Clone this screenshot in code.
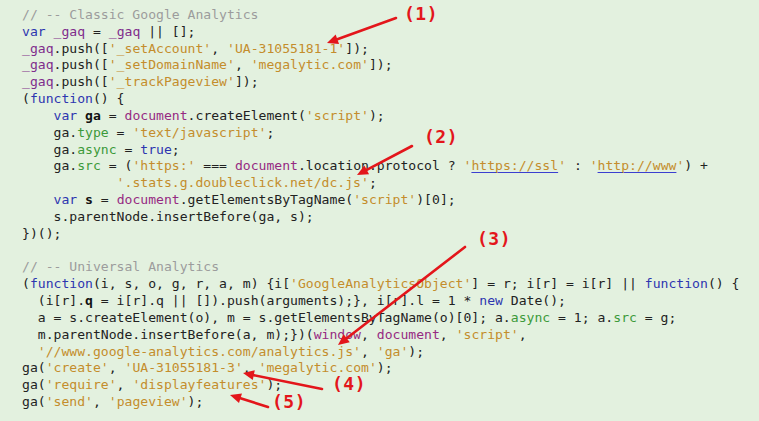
type Kind = "" | "c" | "k" | "v" | "d" | "s" | "p" | "b" | "u";
type Tok = [Kind, string];

// token colours, roughly a Xcode-ish light theme on green paper
const KIND_CLASS: Record<Kind, string> = {
  "":  "text-[#222]",
  c:   "text-[#9c9c9c]",
  k:   "text-[#2d36b0]",
  v:   "text-[#7f2d8c]",
  d:   "text-[#962a82]",
  s:   "text-[#c48d2c]",
  p:   "text-[#3c9a3a]",
  b:   "text-[#111] font-bold",
  u:   "text-[#c48d2c] underline decoration-[#3b3fd0] underline-offset-2",
};

const LINES: Tok[][] = [
  [["c", "// -- Classic Google Analytics"]],
  [["k", "var"], ["", " "], ["v", "_gaq"], ["", " = "], ["v", "_gaq"], ["", " || [];"]],
  [["v", "_gaq"], ["", ".push(["], ["s", "'_setAccount'"], ["", ", "], ["s", "'UA-31055181-1'"], ["", "]);"]],
  [["v", "_gaq"], ["", ".push(["], ["s", "'_setDomainName'"], ["", ", "], ["s", "'megalytic.com'"], ["", "]);"]],
  [["v", "_gaq"], ["", ".push(["], ["s", "'_trackPageview'"], ["", "]);"]],
  [["", "("], ["k", "function"], ["", "() {"]],
  [["", "    "], ["k", "var"], ["", " "], ["b", "ga"], ["", " = "], ["d", "document"], ["", ".createElement("], ["s", "'script'"], ["", ");"]],
  [["", "    ga."], ["p", "type"], ["", " = "], ["s", "'text/javascript'"], ["", ";"]],
  [["", "    ga."], ["p", "async"], ["", " = "], ["k", "true"], ["", ";"]],
  [
    ["", "    ga."], ["p", "src"], ["", " = ("], ["s", "'https:'"], ["", " === "], ["d", "document"],
    ["", ".location.protocol ? "], ["s", "'"], ["u", "https://ssl"], ["s", "'"], ["", " : "],
    ["s", "'"], ["u", "http://www"], ["s", "'"], ["", ") +"],
  ],
  [["", "            "], ["s", "'.stats.g.doubleclick.net/dc.js'"], ["", ";"]],
  [["", "    "], ["k", "var"], ["", " "], ["b", "s"], ["", " = "], ["d", "document"], ["", ".getElementsByTagName("], ["s", "'script'"], ["", ")[0];"]],
  [["", "    s.parentNode.insertBefore(ga, s);"]],
  [["", "})();"]],
  [],
  [["c", "// -- Universal Analytics"]],
  [
    ["", "("], ["k", "function"], ["", "(i, s, o, g, r, a, m) {i["], ["s", "'GoogleAnalyticsObject'"],
    ["", "] = r; i[r] = i[r] || "], ["k", "function"], ["", "() {"],
  ],
  [["", "  (i[r]."], ["b", "q"], ["", " = i[r].q || []).push(arguments);}, i[r].l = 1 * "], ["k", "new"], ["", " Date();"]],
  [["", "  a = s.createElement(o), m = s.getElementsByTagName(o)[0]; a."], ["p", "async"], ["", " = 1; a."], ["p", "src"], ["", " = g;"]],
  [["", "  m.parentNode.insertBefore(a, m);})("], ["d", "window"], ["", ", "], ["d", "document"], ["", ", "], ["s", "'script'"], ["", ","]],
  [["", "  "], ["s", "'//www.google-analytics.com/analytics.js'"], ["", ", "], ["s", "'ga'"], ["", ");"]],
  [["", "ga("], ["s", "'create'"], ["", ", "], ["s", "'UA-31055181-3'"], ["", ", "], ["s", "'megalytic.com'"], ["", ");"]],
  [["", "ga("], ["s", "'require'"], ["", ", "], ["s", "'displayfeatures'"], ["", ");"]],
  [["", "ga("], ["s", "'send'"], ["", ", "], ["s", "'pageview'"], ["", ");"]],
];

// red annotation arrows: tail (x1,y1) -> tip (x2,y2)
const ARROWS = [
  { x1: 396, y1: 18, x2: 327, y2: 43 },
  { x1: 412, y1: 146, x2: 357, y2: 175 },
  { x1: 465, y1: 247, x2: 338, y2: 345 },
  { x1: 322, y1: 389, x2: 243, y2: 373 },
  { x1: 268, y1: 407, x2: 230, y2: 395 },
];

const LABELS = [
  { text: "(1)", left: "left-[404px]", top: "top-[8px]" },
  { text: "(2)", left: "left-[424px]", top: "top-[131px]" },
  { text: "(3)", left: "left-[477px]", top: "top-[233px]" },
  { text: "(4)", left: "left-[332px]", top: "top-[378px]" },
  { text: "(5)", left: "left-[272px]", top: "top-[396px]" },
];

function Arrow({ x1, y1, x2, y2 }: { x1: number; y1: number; x2: number; y2: number }) {
  const dx = x2 - x1;
  const dy = y2 - y1;
  const len = Math.hypot(dx, dy);
  const ux = dx / len;
  const uy = dy / len;
  const head = 11;
  const half = 5;
  const bx = x2 - ux * head;
  const by = y2 - uy * head;
  const pts = `${x2},${y2} ${bx - uy * half},${by + ux * half} ${bx + uy * half},${by - ux * half}`;
  return (
    <g>
      <line x1={x1} y1={y1} x2={bx} y2={by} stroke="#e3161b" strokeWidth={2.6} strokeLinecap="round" />
      <polygon points={pts} fill="#e3161b" />
    </g>
  );
}

export default function App() {
  return (
    <div className="relative w-[759px] h-[421px] overflow-hidden bg-[#e3f1df]">
      {/* Code block */}
      <pre
        className="pl-[22px] pt-[7px] text-[13.1px] leading-[16.83px] whitespace-pre"
        style={{ fontFamily: '"DejaVu Sans Mono", "Liberation Mono", monospace' }}
      >
        {LINES.map((line, i) => (
          <div key={i} className="h-[16.83px]">
            {line.map(([kind, text], j) => (
              <span key={j} className={KIND_CLASS[kind]}>{text}</span>
            ))}
          </div>
        ))}
      </pre>

      {/* Annotation arrows */}
      <svg className="absolute inset-0 pointer-events-none" width={759} height={421} viewBox="0 0 759 421">
        {ARROWS.map((a, i) => (
          <Arrow key={i} {...a} />
        ))}
      </svg>

      {/* Annotation labels */}
      {LABELS.map((l) => (
        <span
          key={l.text}
          className={`absolute ${l.left} ${l.top} text-[18px] leading-[12px] font-bold text-[#e3161b] tracking-[0.5px]`}
          style={{ fontFamily: '"DejaVu Sans Mono", "Liberation Mono", monospace' }}
        >
          {l.text}
        </span>
      ))}
    </div>
  );
}
